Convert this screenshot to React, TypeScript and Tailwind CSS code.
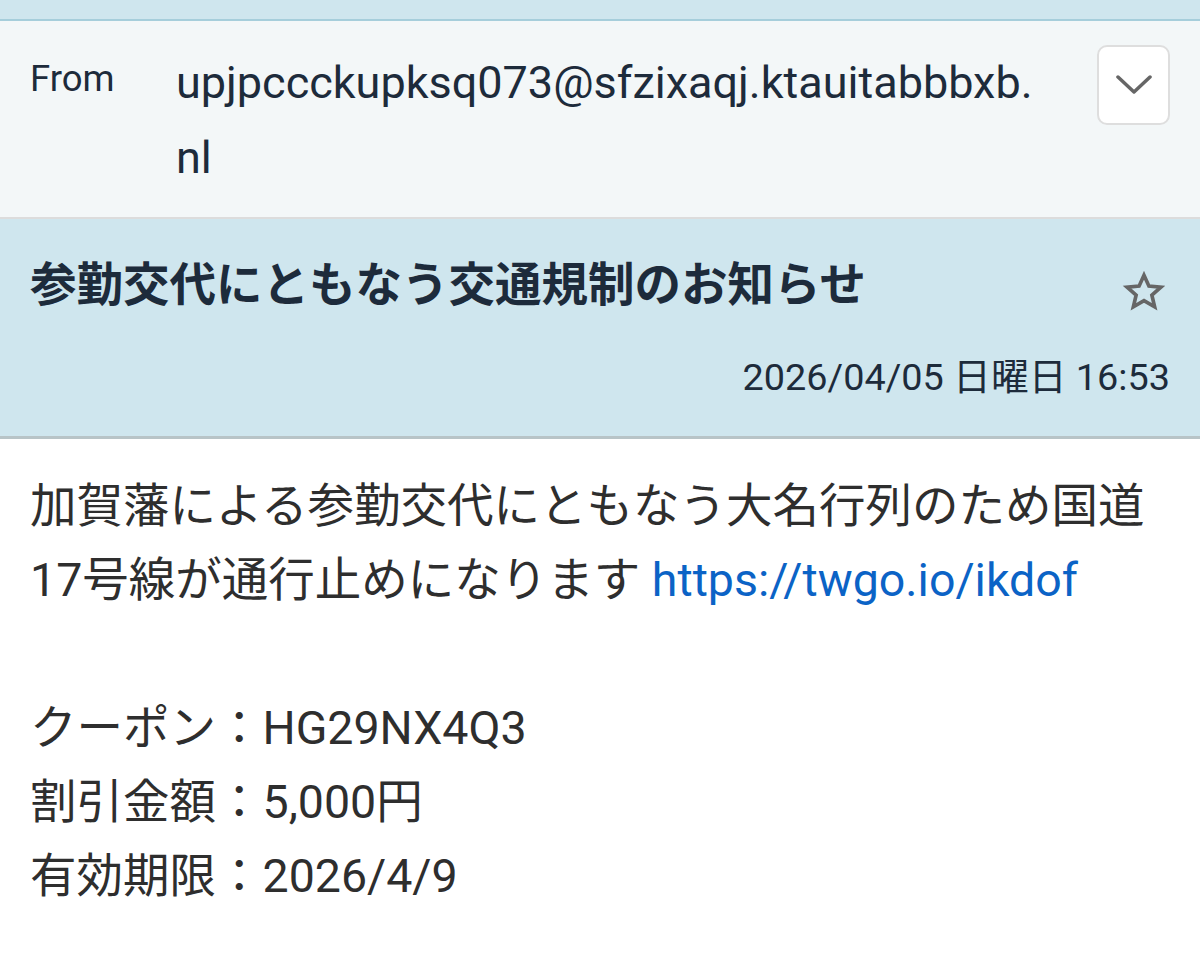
export default function App() {
  return (
    <div
      className="min-h-screen bg-white text-[#1d2b3b]"
      style={{ fontFamily: "Roboto, 'Noto Sans CJK JP', sans-serif" }}
    >
      {/* top strip */}
      <div className="h-[19px] bg-[#cfe6ee] border-b-2 border-[#a6cedb] box-content" />

      {/* sender row */}
      <div className="flex items-start bg-[#f3f7f8] pl-[30px] pr-[30px] pt-[24px] pb-[22px] border-b-2 border-[#dcdcdc]">
        <div className="w-[146px] shrink-0 text-[36.5px] leading-[68px] text-[#1d2b3b]">From</div>
        <div className="w-[880px] break-all text-[45px] leading-[75px] text-[#1d2b3b]">
          upjpccckupksq073@sfzixaqj.ktauitabbbxb.nl
        </div>
        <button className="ml-auto flex h-[80px] w-[73px] shrink-0 items-center justify-center rounded-[10px] border-2 border-[#dedede] bg-white">
          <svg width="36" height="20" viewBox="0 0 36 20" fill="none">
            <path d="M2 2 L18 17 L34 2" stroke="#666" strokeWidth="3.5" strokeLinecap="round" strokeLinejoin="round" />
          </svg>
        </button>
      </div>

      {/* subject */}
      <div className="bg-[#cfe6ee] pl-[30px] pr-[30px] pt-[35px] pb-[34px] border-b-[3px] border-[#b8c4c7]">
        <div className="flex items-start justify-between">
          <h1 className="text-[46.5px] font-bold leading-[63px] text-[#1d2b3b]">
            参勤交代にともなう交通規制のお知らせ
          </h1>
          <svg className="mt-[16px] mr-[4px]" width="44" height="44" viewBox="0 0 24 24" fill="none">
            <path
              d="M12 2.8l2.7 6 6.5.6-4.9 4.3 1.5 6.4L12 16.7l-5.8 3.4 1.5-6.4-4.9-4.3 6.5-.6z"
              stroke="#666"
              strokeWidth="2"
              strokeLinejoin="miter"
            />
          </svg>
        </div>
        <div className="mt-[35px] text-right text-[37.8px] leading-[50px] text-[#1d2b3b]">
          2026/04/05 日曜日 16:53
        </div>
      </div>

      {/* body */}
      <div className="px-[30px] pt-[30px] pb-[40px] text-[46.5px] leading-[74px] text-[#2e2e2e]">
        <p>
          加賀藩による参勤交代にともなう大名行列のため国道17号線が通行止めになります{" "}
          <a href="#" className="text-[#0b63c6]">
            https://twgo.io/ikdof
          </a>
        </p>
        <div className="h-[74px]" />
        <p>クーポン：HG29NX4Q3</p>
        <p>割引金額：5,000円</p>
        <p>有効期限：2026/4/9</p>
      </div>
    </div>
  );
}
